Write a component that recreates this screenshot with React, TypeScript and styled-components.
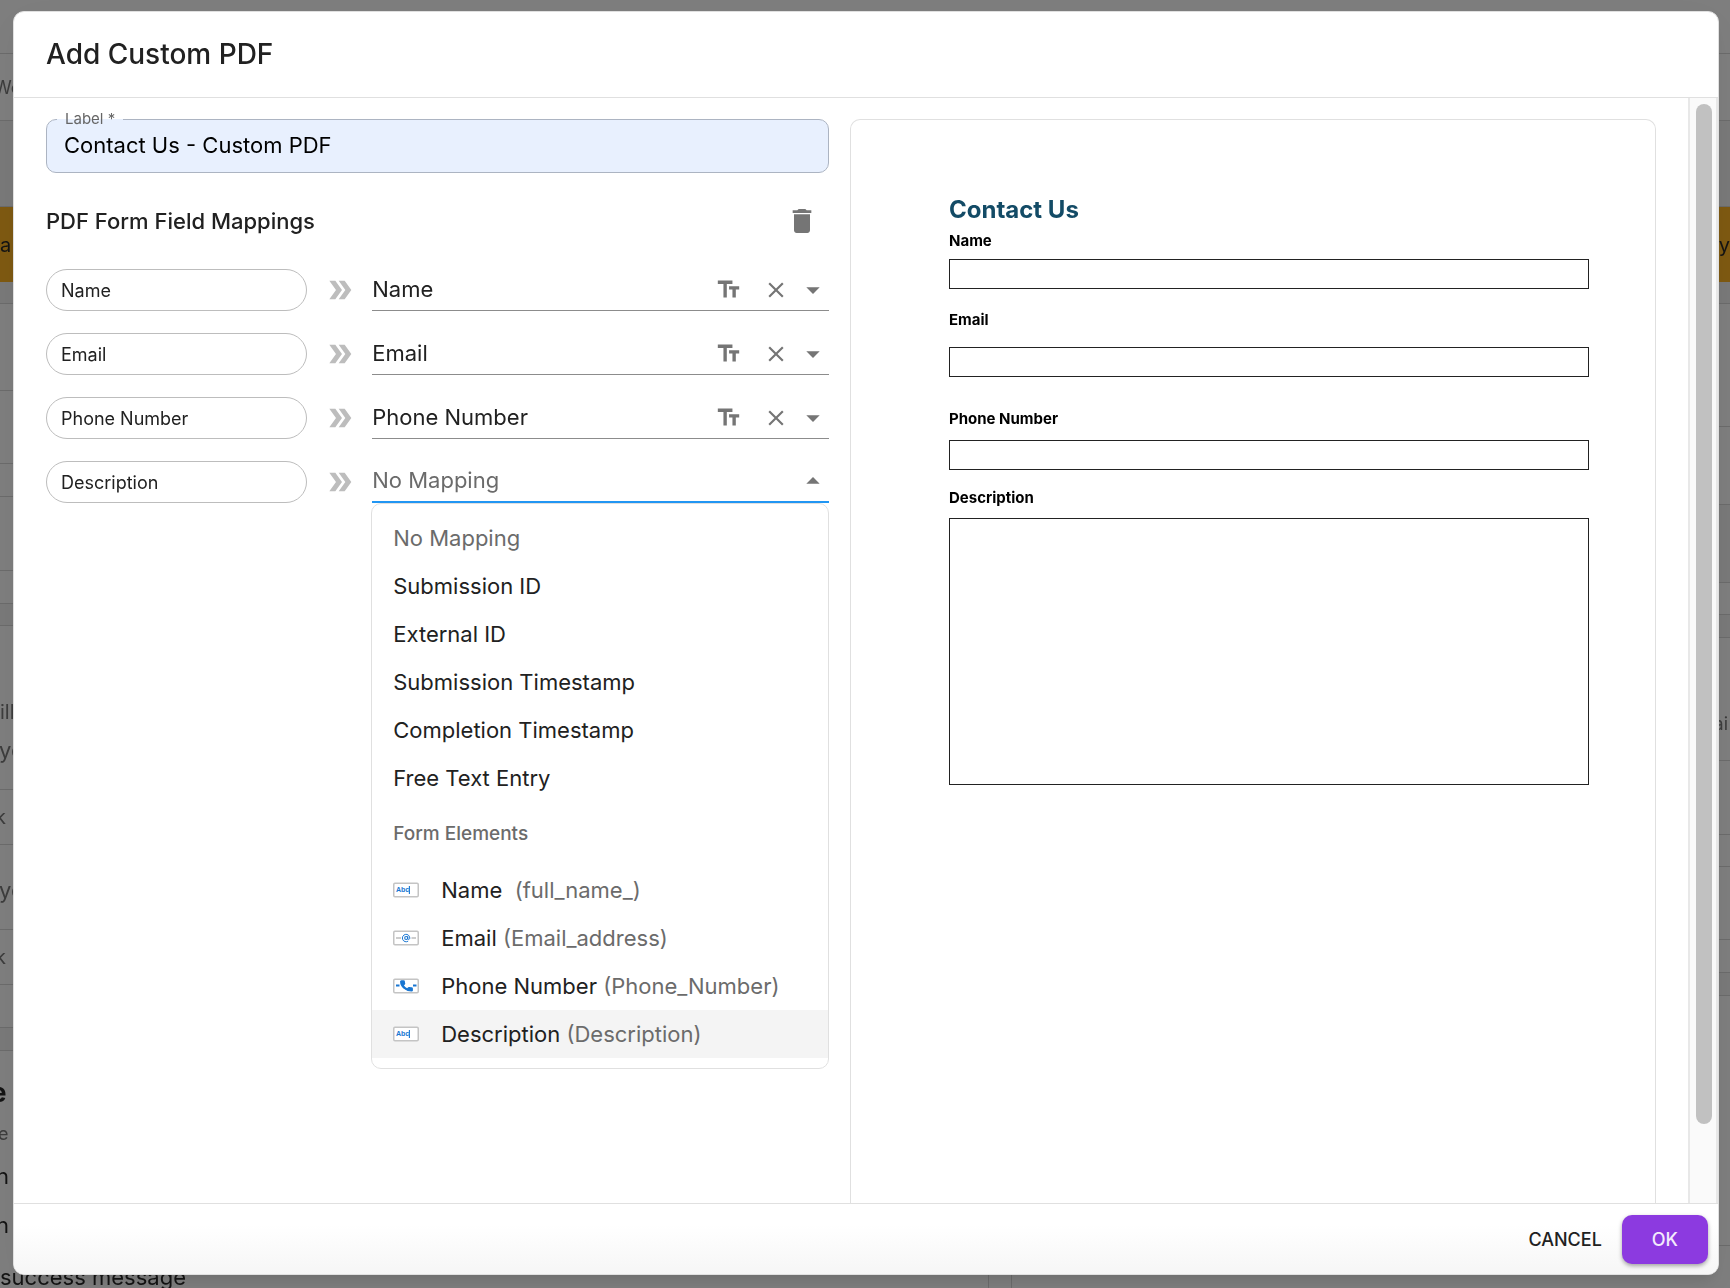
import React, { useState } from "react";
import styled, { createGlobalStyle, css } from "styled-components";

const ink = "#212121";
const muted = "#6b6b6b";
const iconGrey = "#757575";
const line = "#e0e0e0";
const accent = "#2196f3";

const GlobalStyle = createGlobalStyle`
  *, *::before, *::after { box-sizing: border-box; }
  body { margin: 0; background: #7f7f7f; }
  body, input, select, textarea, button { font-family: Inter, "Noto Sans", sans-serif; }
  button { cursor: pointer; }
`;

/* ---------- dimmed page behind the dialog ---------- */

const Page = styled.div`
  position: fixed;
  inset: 0;
  overflow: hidden;
  display: flex;
  flex-direction: column;
  color: #141414;
`;

const Band = styled.div<{ $h: number; $tone?: "plain" | "dark" | "amber"; $indent?: number; $size?: number; $soft?: boolean }>`
  flex: none;
  display: flex;
  align-items: center;
  height: ${(p) => p.$h}px;
  border-bottom: ${(p) => (p.$tone === "amber" ? "none" : "1px solid #6c6c6c")};
  background: ${(p) => (p.$tone === "amber" ? "#7f5a12" : p.$tone === "dark" ? "#7a7a7a" : "transparent")};
  text-indent: ${(p) => p.$indent ?? 0}px;
  font-size: ${(p) => p.$size ?? 18}px;
  color: ${(p) => (p.$soft ? "#3d3d3d" : "inherit")};
  white-space: nowrap;
`;

const BannerBand = styled(Band)`
  justify-content: space-between;
`;

const Halves = styled.div`
  flex: 1;
  display: grid;
  grid-template-columns: 4fr 3fr;
`;

const Half = styled.div`
  display: flex;
  flex-direction: column;
  min-width: 0;
  border-right: 1px solid #6c6c6c;
`;

const RightHalf = styled(Half)`
  margin-left: 22px;
  border-left: 1px solid #6c6c6c;
  border-right: none;
`;

const Line = styled.div<{ $h: number; $size?: number; $bold?: boolean; $soft?: boolean; $end?: boolean; $indent?: number }>`
  flex: none;
  height: ${(p) => p.$h}px;
  line-height: ${(p) => p.$h}px;
  padding-right: 2px;
  font-size: ${(p) => p.$size ?? 22}px;
  font-weight: ${(p) => (p.$bold ? 700 : 400)};
  text-align: ${(p) => (p.$end ? "right" : "left")};
  text-indent: ${(p) => p.$indent ?? 0}px;
  color: ${(p) => (p.$soft ? "#3d3d3d" : "inherit")};
  white-space: nowrap;
`;

/* ---------- dialog ---------- */

const Overlay = styled.div`
  position: relative;
  height: 100vh;
  display: flex;
  padding: 11px 11px 13px 13px;
`;

const Dialog = styled.section`
  flex: 1;
  min-width: 0;
  display: flex;
  flex-direction: column;
  overflow: hidden;
  background: #fff;
  border: 1px solid ${line};
  border-radius: 11px;
  box-shadow: 0 11px 15px -7px rgba(0, 0, 0, 0.12), 0 9px 46px 8px rgba(0, 0, 0, 0.04);
`;

const Header = styled.header`
  flex: none;
  padding: 21px 32px 22px;
  border-bottom: 1px solid ${line};
`;

const Title = styled.h1`
  margin: 0;
  font-size: 28px;
  line-height: 42px;
  font-weight: 500;
  color: ${ink};
`;

const Body = styled.div`
  flex: 1;
  min-height: 0;
  display: flex;
`;

const Content = styled.div`
  flex: 1;
  min-width: 0;
  overflow: hidden;
  display: grid;
  grid-template-columns: 34fr 35fr;
  gap: 21px;
  padding: 21px 32px 0;
`;

const ScrollTrack = styled.div`
  flex: none;
  width: 30px;
  display: grid;
  grid-template-rows: 14fr 1fr;
  padding: 6px;
  background: #fafafa;
  border: solid #e8e8e8;
  border-width: 0 2px;
`;

const ScrollThumb = styled.div`
  width: 16px;
  border-radius: 8px;
  background: #c1c1c1;
`;

const Footer = styled.footer`
  flex: none;
  display: flex;
  justify-content: flex-end;
  padding: 11px 10px 10px;
  border-top: 1px solid ${line};
  background: linear-gradient(#fff 30%, #f6f6f6);
`;

const ActionButton = styled.button<{ $primary?: boolean }>`
  height: 49px;
  padding: 0 ${(p) => (p.$primary ? 30 : 20)}px;
  border: 0;
  border-radius: 10px;
  font-size: 18px;
  font-weight: 500;
  background: transparent;
  color: ${ink};
  ${(p) =>
    p.$primary &&
    css`
      background: #8c3ae0;
      color: #f3eafc;
      box-shadow: 0 2px 4px rgba(0, 0, 0, 0.35);
    `}
`;

/* ---------- left column ---------- */

const FormColumn = styled.div`
  display: flex;
  flex-direction: column;
  gap: 21px;
  min-width: 0;
`;

const Field = styled.div`
  position: relative;
`;

const FieldLabel = styled.label`
  position: absolute;
  left: 11px;
  top: -9px;
  padding: 0 8px;
  font-size: 15px;
  line-height: 18px;
  color: #666;
  background: linear-gradient(#fff 50%, #e8f0fe 50%);
`;

const FieldInput = styled.input`
  display: block;
  width: 100%;
  height: 54px;
  padding: 0 17px 2px;
  border: 1px solid #acb4c2;
  border-radius: 10px;
  background: #e8f0fe;
  font-size: 22px;
  color: #000;
  outline: none;
`;

const SectionHead = styled.div`
  display: flex;
  align-items: center;
  justify-content: space-between;
`;

const SectionTitle = styled.h2`
  margin: 0;
  font-size: 22px;
  font-weight: 500;
  color: ${ink};
`;

const IconButton = styled.button<{ $size: number }>`
  flex: none;
  display: grid;
  place-items: center;
  width: ${(p) => p.$size}px;
  height: ${(p) => p.$size}px;
  padding: 0;
  border: 0;
  background: none;
  color: ${iconGrey};
`;

const Rows = styled.div`
  display: flex;
  flex-direction: column;
  gap: 22px;
`;

const Row = styled.div`
  display: grid;
  grid-template-columns: 4fr 1fr 7fr;
  height: 42px;
`;

const Pill = styled.label`
  display: flex;
  align-items: center;
  padding: 0 14px;
  border: 1px solid #bdbdbd;
  border-radius: 21px;
  font-size: 18px;
  color: ${ink};
`;

const ArrowCell = styled.div`
  display: grid;
  place-items: center;
  color: #bdbdbd;
`;

const Picker = styled.div<{ $open?: boolean }>`
  position: relative;
  display: flex;
  align-items: center;
  min-width: 0;
  border-bottom: ${(p) => (p.$open ? `2px solid ${accent}` : "1px solid #8c8c8c")};
`;

const controlText = css`
  flex: 1;
  min-width: 0;
  width: 100%;
  height: 40px;
  padding: 0 0 2px;
  border: 0;
  outline: none;
  background: transparent;
  font-size: 22px;
  color: ${ink};
`;

const PickerSelect = styled.select`
  ${controlText}
  appearance: none;
`;

const PickerInput = styled.input`
  ${controlText}
  &::placeholder { color: ${muted}; opacity: 1; }
`;

const PickerTools = styled.div`
  flex: none;
  display: flex;
  align-items: center;
  color: ${iconGrey};
`;

const TextTool = styled(IconButton)`
  margin-right: 12px;
`;

const ClearTool = styled(IconButton)`
  margin-right: 4px;
`;

const Popup = styled.div`
  position: absolute;
  z-index: 1;
  top: 42px;
  left: -1px;
  right: 0;
  padding: 10px 0;
  border: 1px solid ${line};
  border-radius: 10px;
  background: #fff;
`;

const OptionList = styled.ul`
  margin: 0;
  padding: 0;
  list-style: none;
`;

const Option = styled.li<{ $active?: boolean; $muted?: boolean }>`
  display: flex;
  align-items: center;
  height: 48px;
  padding: 0 21px 1px;
  font-size: 22px;
  color: ${(p) => (p.$muted ? muted : ink)};
  background: ${(p) => (p.$active ? "#f4f4f4" : "transparent")};
  white-space: pre;
  svg { margin-right: 22px; }
`;

const OptionKey = styled.span`
  color: ${muted};
`;

const GroupTitle = styled.div`
  padding: 0 21px;
  font-size: 19px;
  line-height: 64px;
  font-weight: 500;
  color: ${muted};
`;

/* ---------- PDF preview ---------- */

const Preview = styled.article`
  min-width: 0;
  padding: 75px 66px 0 98px;
  border: 1px solid ${line};
  border-bottom: 0;
  border-radius: 10px 10px 0 0;
`;

const PdfTitle = styled.h2`
  margin: 0 0 6px;
  font-size: 24px;
  line-height: 30px;
  font-weight: 700;
  color: #134b66;
`;

const PdfField = styled.div<{ $gap: number; $after: number }>`
  display: flex;
  flex-direction: column;
  gap: ${(p) => p.$gap}px;
  margin-bottom: ${(p) => p.$after}px;
`;

const PdfLabel = styled.label`
  font-size: 15px;
  line-height: 20px;
  font-weight: 700;
  color: #000;
`;

const pdfBox = css`
  display: block;
  width: 100%;
  padding: 4px 8px;
  border: 1px solid #222;
  border-radius: 0;
  background: #fff;
  outline: none;
  resize: none;
`;

const PdfInput = styled.input`
  ${pdfBox}
  height: 30px;
`;

const PdfArea = styled.textarea`
  ${pdfBox}
  height: 267px;
`;

/* ---------- icons ---------- */

const Icon = ({ d, size }: { d: string; size: number }) => (
  <svg width={size} height={size} viewBox="0 0 24 24" fill="currentColor" aria-hidden="true">
    <path d={d} />
  </svg>
);

const paths = {
  trash: "M6 19c0 1.1.9 2 2 2h8c1.1 0 2-.9 2-2V7H6v12zM19 4h-3.5l-1-1h-5l-1 1H5v2h14V4z",
  arrows: "M15.5 5H11l5 7-5 7h4.5l5-7zM8.5 5H4l5 7-5 7h4.5l5-7z",
  text: "M2.5 4v3h5v12h3V7h5V4h-13zm19 5h-9v3h3v7h3v-7h3V9z",
  close: "M19 6.41L17.59 5 12 10.59 6.41 5 5 6.41 10.59 12 5 17.59 6.41 19 12 13.41 17.59 19 19 17.59 13.41 12z",
  down: "M7 10l5 5 5-5z",
  up: "M7 14l5-5 5 5z",
  phone:
    "M6.62 10.79c1.44 2.83 3.76 5.14 6.59 6.59l2.2-2.2c.27-.27.67-.36 1.02-.24 1.12.37 2.33.57 3.57.57.55 0 1 .45 1 1V20c0 .55-.45 1-1 1-9.39 0-17-7.61-17-17 0-.55.45-1 1-1h3.5c.55 0 1 .45 1 1 0 1.25.2 2.45.57 3.57.11.35.03.74-.25 1.02l-2.2 2.2z",
};

type Kind = "text" | "email" | "phone";

const FieldIcon = ({ kind }: { kind: Kind }) => (
  <svg width="26" height="16" viewBox="0 0 26 16" aria-hidden="true">
    <rect x="0.75" y="1.25" width="24.5" height="13.5" rx="1.2" fill="#fff" stroke="#c4c4c4" strokeWidth="1.5" />
    {kind === "text" && (
      <>
        <text x="3" y="10.4" fontSize="7" fontWeight="700" fontFamily="Liberation Sans, sans-serif" fill="#1976d2">Abc</text>
        <path d="M16.4 4v8" stroke="#1976d2" strokeWidth="1.1" />
      </>
    )}
    {kind === "email" && (
      <>
        <path d="M3 8h5M18.5 8H23" stroke="#bdbdbd" strokeWidth="1.4" />
        <circle cx="13.2" cy="8" r="1.5" fill="none" stroke="#1976d2" strokeWidth="1.1" />
        <path d="M14.8 6.2v2.300c0 1.400 2 1.200 2-.5a3.700 3.700 0 1 0-1.600 3.100" fill="none" stroke="#1976d2" strokeWidth="1" />
      </>
    )}
    {kind === "phone" && (
      <>
        <path d="M3 7.5h3.500M20 7.500h3.500" stroke="#1976d2" strokeWidth="1.8" />
        <path d={paths.phone} transform="translate(5.800 1.200) scale(.64 .56)" fill="#1976d2" stroke="#1976d2" strokeWidth="2" />
      </>
    )}
  </svg>
);

/* ---------- data ---------- */

const general = ["Submission ID", "External ID", "Submission Timestamp", "Completion Timestamp", "Free Text Entry"];

const elements: { label: string; key: string; kind: Kind }[] = [
  { label: "Name ", key: "(full_name_)", kind: "text" },
  { label: "Email", key: "(Email_address)", kind: "email" },
  { label: "Phone Number", key: "(Phone_Number)", kind: "phone" },
  { label: "Description", key: "(Description)", kind: "text" },
];

const mapped = ["Name", "Email", "Phone Number"];

const MappedRow = ({ name }: { name: string }) => {
  const [value, setValue] = useState(name);
  const id = `map-${name.replace(" ", "-").toLowerCase()}`;
  return (
    <Row>
      <Pill htmlFor={id}>{name}</Pill>
      <ArrowCell><Icon d={paths.arrows} size={32} /></ArrowCell>
      <Picker>
        <PickerSelect id={id} value={value} onChange={(e) => setValue(e.target.value)}>
          <option value="">No Mapping</option>
          {[...mapped, ...general].map((o) => <option key={o}>{o}</option>)}
        </PickerSelect>
        <PickerTools>
          <TextTool $size={36} type="button" aria-label={`Text format for ${name}`}><Icon d={paths.text} size={27} /></TextTool>
          <ClearTool $size={34} type="button" aria-label={`Clear ${name}`} onClick={() => setValue("")}><Icon d={paths.close} size={26} /></ClearTool>
          <Icon d={paths.down} size={32} />
        </PickerTools>
      </Picker>
    </Row>
  );
};

const OpenRow = () => (
  <Row>
    <Pill htmlFor="map-description">Description</Pill>
    <ArrowCell><Icon d={paths.arrows} size={32} /></ArrowCell>
    <Picker $open>
      <PickerInput id="map-description" role="combobox" aria-expanded="true" aria-controls="mapping-options" placeholder="No Mapping" />
      <PickerTools>
        <IconButton $size={32} type="button" aria-label="Close options"><Icon d={paths.up} size={32} /></IconButton>
      </PickerTools>
      <Popup id="mapping-options" role="listbox">
        <OptionList role="presentation">
          <Option role="option" $muted>No Mapping</Option>
          {general.map((o) => <Option role="option" key={o}>{o}</Option>)}
        </OptionList>
        <GroupTitle>Form Elements</GroupTitle>
        <OptionList role="group" aria-label="Form Elements">
          {elements.map((e) => (
            <Option role="option" key={e.key} $active={e.label === "Description"} aria-selected={e.label === "Description"}>
              <FieldIcon kind={e.kind} />
              {e.label} <OptionKey>{e.key}</OptionKey>
            </Option>
          ))}
        </OptionList>
      </Popup>
    </Picker>
  </Row>
);

const Backdrop = () => (
  <Page aria-hidden="true">
    <Band $h={54} />
    <Band $h={67} $indent={-6} $soft>Wo</Band>
    <Band $h={86} $tone="dark" />
    <BannerBand $h={75} $tone="amber" $size={20}><span>a</span><span>y</span></BannerBand>
    <Band $h={22} $tone="dark" />
    <Halves>
      <Half>
        <Band $h={87} />
        <Band $h={73} />
        <Band $h={33} />
        <Band $h={74} />
        <Band $h={33} />
        <Band $h={22} $tone="dark" />
        <Line $h={66} />
        <Line $h={40} $size={20} $soft>ill</Line>
        <Line $h={36} $soft $indent={-1}>yo</Line>
        <Band $h={22} />
        <Band $h={55} $size={20} $indent={-5} $soft>k</Band>
        <Line $h={6} />
        <Band $h={79} $size={22} $indent={-1} $soft>yo</Band>
        <Band $h={55} $size={20} $indent={-5} $soft>k</Band>
        <Band $h={43} />
        <Band $h={23} $tone="dark" />
        <Line $h={22} />
        <Line $h={40} $size={26} $bold $indent={-9}>e</Line>
        <Line $h={42} $size={18} $soft $indent={-2}>e</Line>
        <Line $h={42} $indent={-4}>n</Line>
        <Line $h={56} $indent={-4}>n</Line>
        <Line $h={48}>success message</Line>
      </Half>
      <RightHalf>
        <Band $h={123} />
        <Band $h={78} />
        <Band $h={78} $tone="dark" />
        <Band $h={32} />
        <Band $h={23} $tone="dark" />
        <Line $h={56} />
        <Line $h={60} $size={18} $end $soft>ai</Line>
        <Band $h={7} />
        <Band $h={74} />
        <Band $h={32} />
        <Band $h={73} />
        <Band $h={33} />
        <Band $h={23} $tone="dark" />
        <Band $h={250} />
      </RightHalf>
    </Halves>
  </Page>
);

export default function App() {
  const [label, setLabel] = useState("Contact Us - Custom PDF");
  return (
    <>
      <GlobalStyle />
      <Backdrop />
      <Overlay>
        <Dialog role="dialog" aria-modal="true" aria-labelledby="dialog-title">
          <Header><Title id="dialog-title">Add Custom PDF</Title></Header>
          <Body>
            <Content>
              <FormColumn>
                <Field>
                  <FieldInput id="pdf-label" value={label} onChange={(e) => setLabel(e.target.value)} />
                  <FieldLabel htmlFor="pdf-label">Label *</FieldLabel>
                </Field>
                <SectionHead>
                  <SectionTitle>PDF Form Field Mappings</SectionTitle>
                  <IconButton $size={54} type="button" aria-label="Delete mappings"><Icon d={paths.trash} size={32} /></IconButton>
                </SectionHead>
                <Rows>
                  {mapped.map((m) => <MappedRow key={m} name={m} />)}
                  <OpenRow />
                </Rows>
              </FormColumn>
              <Preview>
                <PdfTitle>Contact Us</PdfTitle>
                <PdfField $gap={8} $after={21}><PdfLabel htmlFor="pdf-name">Name</PdfLabel><PdfInput id="pdf-name" /></PdfField>
                <PdfField $gap={17} $after={32}><PdfLabel htmlFor="pdf-email">Email</PdfLabel><PdfInput id="pdf-email" /></PdfField>
                <PdfField $gap={11} $after={18}><PdfLabel htmlFor="pdf-phone">Phone Number</PdfLabel><PdfInput id="pdf-phone" /></PdfField>
                <PdfField $gap={10} $after={0}><PdfLabel htmlFor="pdf-description">Description</PdfLabel><PdfArea id="pdf-description" /></PdfField>
              </Preview>
            </Content>
            <ScrollTrack aria-hidden="true"><ScrollThumb /></ScrollTrack>
          </Body>
          <Footer>
            <ActionButton type="button">CANCEL</ActionButton>
            <ActionButton type="button" $primary>OK</ActionButton>
          </Footer>
        </Dialog>
      </Overlay>
    </>
  );
}
